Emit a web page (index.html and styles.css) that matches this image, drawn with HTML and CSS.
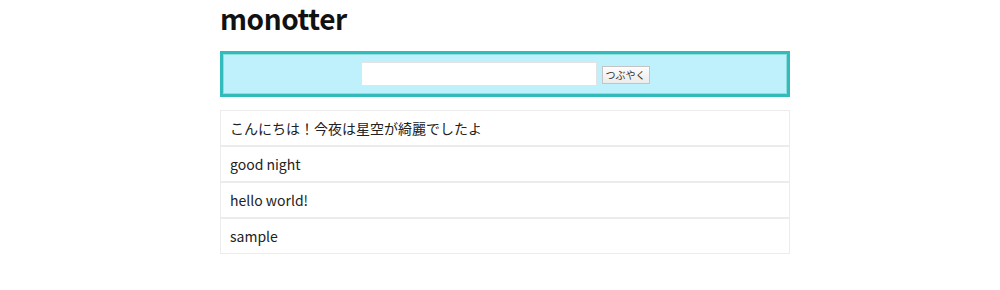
FILE: index.html
```html
<!DOCTYPE html>
<html lang="ja">
<head>
<meta charset="utf-8">
<title>monotter</title>
<link rel="stylesheet" href="styles.css">
</head>
<body>
<div class="page">
  <h1 class="title">monotter</h1>
  <form class="post-form">
    <input class="post-input" type="text">
    <button class="post-button" type="button">つぶやく</button>
  </form>
  <ul class="posts">
    <li class="post">こんにちは！今夜は星空が綺麗でしたよ</li>
    <li class="post">good night</li>
    <li class="post">hello world!</li>
    <li class="post">sample</li>
  </ul>
</div>
</body>
</html>
```
FILE: styles.css
```css
html, body {
  margin: 0;
  padding: 0;
  background: #fff;
}
body {
  padding-left: 10px;
  font-family: "Noto Sans CJK JP", "Noto Sans", sans-serif;
  color: #222;
}
.page {
  width: 570px;
  margin: 0 auto;
}
.title {
  box-sizing: border-box;
  margin: 0;
  padding-top: 0;
  height: 51px;
  line-height: 36px;
  font-size: 28px;
  font-weight: 700;
  color: #111;
  letter-spacing: -0.4px;
}
.post-form {
  box-sizing: border-box;
  height: 46px;
  margin: 0;
  border: 3px solid #33bbbb;
  box-shadow: inset 0 0 0 1px #8fdede;
  background: #bff1fd;
  display: flex;
  align-items: center;
  justify-content: center;
  gap: 5px;
}
.post-input {
  box-sizing: border-box;
  width: 236px;
  height: 24px;
  margin: 0;
  border: 1px solid #e3e3e3;
  background: #fff;
  padding: 0 4px;
}
.post-button {
  box-sizing: border-box;
  width: 48px;
  height: 18px;
  margin: 1px 0 0 0;
  padding: 0;
  border: 1px solid #c4c4c4;
  background: linear-gradient(#fdfdfd, #ececec);
  font-family: "Noto Sans CJK JP", sans-serif;
  font-size: 10px;
  line-height: 16px;
  color: #333;
}
.posts {
  list-style: none;
  margin: 13px 0 0 0;
  padding: 0;
}
.post {
  box-sizing: border-box;
  height: 36px;
  border: 1px solid #ececec;
  padding: 0 9px;
  font-size: 14px;
  line-height: 34px;
  color: #222;
}
```
